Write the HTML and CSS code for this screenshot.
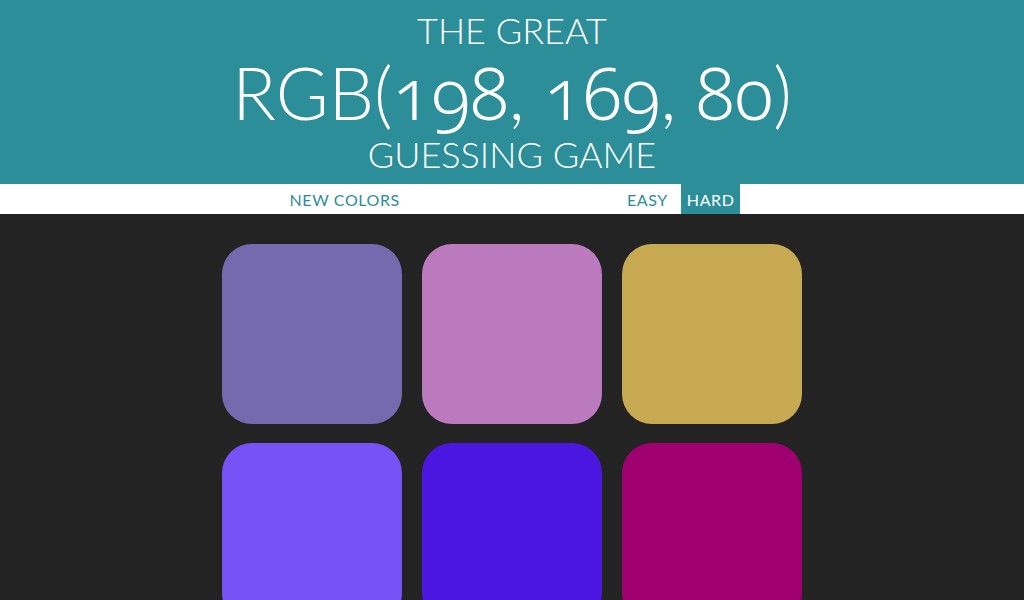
FILE: index.html
```html
<!DOCTYPE html>
<html>
<head>
<meta charset="utf-8">
<title>Color Game</title>
<link rel="stylesheet" href="styles.css">
</head>
<body>
<header class="hero">
  <div class="hero-line hero-small">THE GREAT</div>
  <div class="hero-line hero-big">RGB(<span class="digits">198</span>, <span class="digits">169</span>, <span class="digits">80</span>)</div>
  <div class="hero-line hero-small hero-last">GUESSING GAME</div>
</header>
<nav class="stripe">
  <button class="btn btn-reset">NEW COLORS</button>
  <span class="message"></span>
  <button class="btn btn-mode">EASY</button>
  <button class="btn btn-mode selected">HARD</button>
</nav>
<main class="board">
  <div class="square" style="background: rgb(118, 106, 174)"></div>
  <div class="square" style="background: rgb(186, 122, 189)"></div>
  <div class="square" style="background: rgb(198, 169, 80)"></div>
  <div class="square" style="background: rgb(119, 82, 247)"></div>
  <div class="square" style="background: rgb(75, 22, 224)"></div>
  <div class="square" style="background: rgb(160, 0, 111)"></div>
</main>
</body>
</html>
```
FILE: styles.css
```css
html, body {
  margin: 0;
  padding: 0;
  background: #232323;
  font-family: "Lato", "Open Sans", sans-serif;
  overflow: hidden;
}

.hero {
  background: #2c8e99;
  color: #fff;
  text-align: center;
  padding-top: 8px;
  height: 176px;
}

.hero-line {
  white-space: nowrap;
}

.hero-small {
  font-size: 36px;
  line-height: 44px;
  font-weight: 300;
}

.hero-big {
  font-size: 72px;
  line-height: 80px;
  font-weight: 300;
}

.digits {
  font-family: "Noto Sans", "Lato", sans-serif;
  font-weight: 300;
  font-variant-numeric: oldstyle-nums;
  font-feature-settings: "onum" 1;
}

.stripe {
  background: #fff;
  height: 30px;
  display: flex;
  justify-content: center;
  align-items: stretch;
}

.btn {
  border: none;
  background: none;
  color: #2c8e99;
  font-family: inherit;
  font-size: 16px;
  letter-spacing: 0.6px;
  padding: 0 6px;
  margin: 0;
  cursor: pointer;
  text-transform: uppercase;
}

.message {
  width: 215px;
}

.btn-mode + .btn-mode {
  margin-left: 7px;
}

.btn.selected {
  background: #2c8e99;
  color: #fff;
}

.board {
  width: 600px;
  margin: 0 auto;
  padding-top: 20.5px;
  display: flex;
  flex-wrap: wrap;
}

.square {
  width: 180px;
  height: 180px;
  margin: 9.5px 10px;
  border-radius: 30px;
}
```
